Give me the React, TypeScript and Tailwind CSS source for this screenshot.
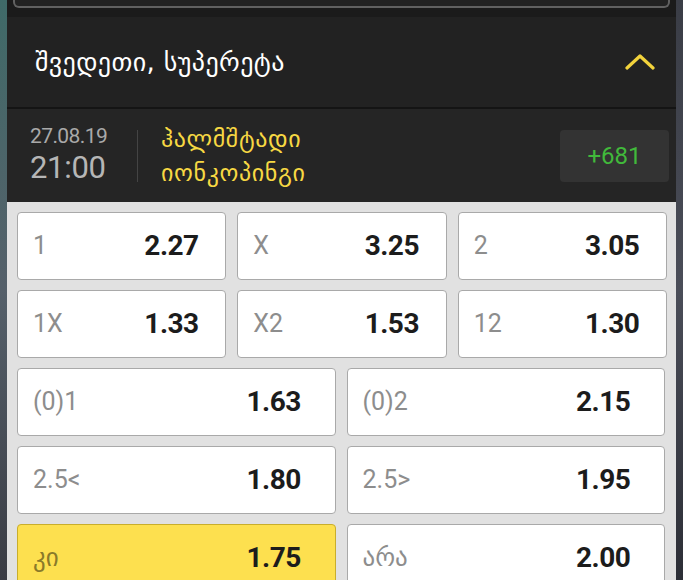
import React from "react";

const num = { fontFamily: "Roboto, 'Liberation Sans', sans-serif" } as React.CSSProperties;
const geo = { fontFamily: "'DejaVu Sans', 'Noto Sans', sans-serif" } as React.CSSProperties;

function Cell({ label, value, wide, selected, georgian }: { label: string; value: string; wide?: boolean; selected?: boolean; georgian?: boolean }) {
  return (
    <div
      className={
        "flex h-[68px] items-center rounded-[4px] border pl-[15px] " +
        (selected ? "border-[#c9ae2c] bg-[#fde04f]" : "border-[#a9a9a9] bg-white")
      }
    >
      <span
        className={"flex-1 text-[25px] " + (selected ? "text-[#8a7a2a]" : "text-[#8d8d8d]")}
        style={georgian ? geo : num}
      >
        {label}
      </span>
      <span
        className={"text-[28px] font-bold tracking-[-0.5px] text-[#1c1c1c] " + (wide ? "w-[88px]" : "w-[81px]")}
        style={num}
      >
        {value}
      </span>
    </div>
  );
}

export default function App() {
  return (
    <div className="flex h-[580px] w-[683px] overflow-hidden bg-[#2a2f36]">
      <div className="w-[7px] shrink-0 bg-gradient-to-b from-[#3f6a68] via-[#55606a] to-[#3a3c44]" />
      <div className="flex min-w-0 flex-1 flex-col">
        <div className="h-[17px] shrink-0 bg-[#1b1b1b] px-[6px]">
          <div className="h-[8px] rounded-b-[6px] border-2 border-t-0 border-[#616161] bg-[#222]" />
        </div>
        <div className="flex h-[90px] shrink-0 items-center justify-between bg-[#222222] pl-[28px] pr-[21px]">
          <span className="text-[26px] tracking-[0.4px] text-white" style={geo}>
            შვედეთი, სუპერეტა
          </span>
          <svg width="30" height="16" viewBox="0 0 30 16">
            <path d="M2 14 L15 2 L28 14" fill="none" stroke="#f2d33c" strokeWidth="3.2" strokeLinecap="round" strokeLinejoin="round" />
          </svg>
        </div>
        <div className="h-[2px] shrink-0 bg-[#141414]" />
        <div className="flex h-[93px] shrink-0 items-center bg-[#252525] pl-[23px] pr-[7px]">
          <div className="flex w-[107px] flex-col" style={num}>
            <span className="text-[21px] leading-[25px] tracking-[-0.6px] text-[#a9a9a9]">27.08.19</span>
            <span className="text-[31px] leading-[38px] tracking-[-0.3px] text-[#b6b6b6]">21:00</span>
          </div>
          <div className="h-[52px] w-[1px] bg-[#444]" />
          <div className="ml-[23px] flex flex-1 flex-col text-[24px] leading-[34px] tracking-[0.6px] text-[#f7d843]" style={geo}>
            <span>ჰალმშტადი</span>
            <span>იონკოპინგი</span>
          </div>
          <div className="flex h-[52px] w-[109px] items-center justify-center rounded-[4px] bg-[#333333]">
            <span className="text-[24px] text-[#41b93b]" style={num}>
              +681
            </span>
          </div>
        </div>
        <div className="flex flex-1 flex-col gap-[10px] bg-[#e1e1e1] pl-[10px] pr-[9px] pt-[10px]">
          <div className="grid shrink-0 grid-cols-3 gap-[11px]">
            <Cell label="1" value="2.27" />
            <Cell label="X" value="3.25" />
            <Cell label="2" value="3.05" />
          </div>
          <div className="grid shrink-0 grid-cols-3 gap-[11px]">
            <Cell label="1X" value="1.33" />
            <Cell label="X2" value="1.53" />
            <Cell label="12" value="1.30" />
          </div>
          <div className="grid shrink-0 grid-cols-2 gap-[11px] pr-[2px]">
            <Cell label="(0)1" value="1.63" wide />
            <Cell label="(0)2" value="2.15" wide />
          </div>
          <div className="grid shrink-0 grid-cols-2 gap-[11px] pr-[2px]">
            <Cell label="2.5<" value="1.80" wide />
            <Cell label="2.5>" value="1.95" wide />
          </div>
          <div className="grid shrink-0 grid-cols-2 gap-[11px] pr-[2px]">
            <Cell label="კი" value="1.75" wide selected georgian />
            <Cell label="არა" value="2.00" wide georgian />
          </div>
        </div>
      </div>
      <div className="w-[7px] shrink-0 bg-gradient-to-b from-[#3a3d46] via-[#4a4d58] to-[#2c2e36]" />
    </div>
  );
}
